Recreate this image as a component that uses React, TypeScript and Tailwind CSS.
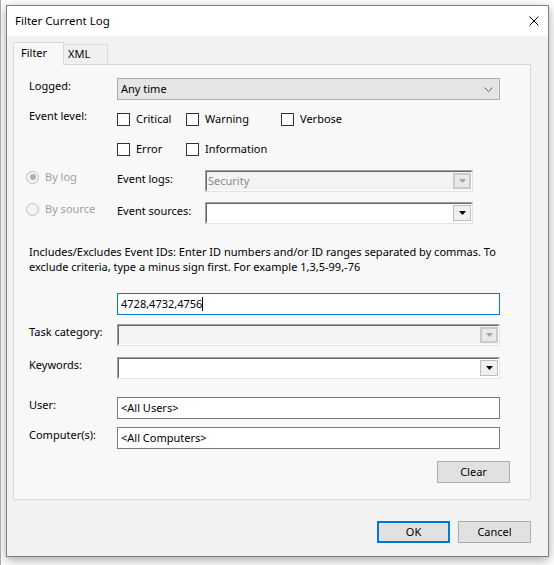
import React from 'react';

const DownArrow = ({ color }: { color: string }) => (
  <svg width="7" height="4" viewBox="0 0 7 4">
    <polygon points="0,0 7,0 3.5,4" fill={color} />
  </svg>
);

const Checkbox = ({ label }: { label: string }) => (
  <div className="flex items-center gap-[6px] h-[22px]">
    <span className="w-[13px] h-[13px] border border-[#333333] bg-white" />
    <span>{label}</span>
  </div>
);

const Radio = ({ label, checked }: { label: string; checked?: boolean }) => (
  <div className="flex items-center gap-[6px] h-[14px] text-[#a0a0a0]">
    <span className="w-[13px] h-[13px] rounded-full border border-[#bcbcbc] bg-[#f4f4f4] flex items-center justify-center">
      {checked && <span className="w-[6px] h-[6px] rounded-full bg-[#b0b0b0]" />}
    </span>
    <span>{label}</span>
  </div>
);

// old style sunken combo box with the square drop button
const ClassicCombo = ({ value, disabled, wide }: { value?: string; disabled?: boolean; wide?: boolean }) => (
  <div
    className={
      (wide ? 'w-[383px] ' : 'w-[268px] ') +
      'h-[22px] border border-t-[#a0a0a0] border-l-[#a0a0a0] border-b-[#e3e3e3] border-r-[#e3e3e3]'
    }
  >
    <div
      className={
        'h-full flex items-center border border-t-[#696969] border-l-[#696969] border-b-white border-r-white ' +
        (disabled ? 'bg-[#f3f3f3]' : 'bg-white')
      }
    >
      <span className="flex-1 pl-[1px] text-[#8a8a8a] leading-[16px]">{value}</span>
      {disabled ? (
        <span className="w-[18px] h-[16px] border-2 border-[#cacaca] bg-[#e9e9e9] flex items-center justify-center">
          <DownArrow color="#a6a6a6" />
        </span>
      ) : (
        <span className="w-[18px] h-[16px] border border-[#bdbdbd] bg-[#f0f0f0] flex items-center justify-center">
          <DownArrow color="#000000" />
        </span>
      )}
    </div>
  </div>
);

const TextBox = ({ value, focused }: { value: string; focused?: boolean }) => (
  <div
    className={
      'w-[383px] h-[22px] bg-white flex items-center pl-[3px] border ' +
      (focused ? 'border-[#0078d7]' : 'border-[#7a7a7a]')
    }
  >
    <span className="leading-[16px]">{value}</span>
    {focused && <span className="w-px h-[14px] bg-black" />}
  </div>
);

const Button = ({ label, primary }: { label: string; primary?: boolean }) => (
  <div
    className={
      'w-[73px] h-[22px] bg-[#e1e1e1] flex items-center justify-center leading-[16px] ' +
      (primary ? 'border-2 border-[#0078d7]' : 'border border-[#adadad]')
    }
  >
    {label}
  </div>
);

const Label = ({ text }: { text: string }) => <div className="w-[88px] leading-[16px]">{text}</div>;

export default function App() {
  return (
    <div className="w-[554px] h-[565px] bg-white border-l border-[#a8a8a8] pl-[5px] pt-[5px] overflow-hidden font-['Noto_Sans','Open_Sans',sans-serif] text-[11px] text-black">
      <div className="w-[543px] h-[552px] border border-[#808080] bg-[#f2f2f2] flex flex-col shadow-[0_3px_10px_rgba(0,0,0,0.35)]">
        {/* title bar */}
        <div className="h-[30px] bg-white flex items-center justify-between pl-[8px] pr-[9px]">
          <span className="text-[11.5px]">Filter Current Log</span>
          <svg width="10" height="10" viewBox="0 0 10 10">
            <path d="M0.5 0.5 L9.5 9.5 M9.5 0.5 L0.5 9.5" stroke="#000" strokeWidth="1" />
          </svg>
        </div>

        <div className="flex-1 px-[6px] pt-[6px]">
          {/* tabs */}
          <div className="flex items-end h-[23px] relative z-10">
            <div className="w-[51px] h-[23px] border border-b-0 border-[#d9d9d9] bg-[#f8f8f8] pl-[7px] pt-[2px] leading-[16px]">
              Filter
            </div>
            <div className="w-[44px] h-[20px] mb-px border border-l-0 border-b-0 border-[#d9d9d9] bg-[#f0f0f0] pl-[4px] pt-[1px] leading-[16px]">
              XML
            </div>
          </div>

          {/* tab page */}
          <div className="-mt-px w-[518px] h-[436px] border border-[#d9d9d9] bg-[#f8f8f8] pl-[15px] pt-[13px]">
            <div className="flex">
              <Label text="Logged:" />
              <div className="w-[383px] h-[22px] bg-[#e5e5e5] border border-[#adadad] flex items-center justify-between pl-[3px] pr-[6px]">
                <span className="leading-[16px]">Any time</span>
                <svg width="9" height="5" viewBox="0 0 9 5">
                  <path d="M0.5 0.5 L4.5 4.5 L8.5 0.5" stroke="#606060" strokeWidth="1" fill="none" />
                </svg>
              </div>
            </div>

            <div className="flex mt-[8px]">
              <Label text="Event level:" />
              <div className="grid grid-cols-[69px_95px_auto] gap-y-[8px]">
                <Checkbox label="Critical" />
                <Checkbox label="Warning" />
                <Checkbox label="Verbose" />
                <Checkbox label="Error" />
                <Checkbox label="Information" />
              </div>
            </div>

            <div className="flex mt-[10px] -ml-[3px]">
              <div className="w-[91px]">
                <Radio label="By log" checked />
              </div>
              <div className="w-[88px] leading-[16px] pt-[1px]">Event logs:</div>
              <ClassicCombo value="Security" disabled />
            </div>

            <div className="flex mt-[10px] -ml-[3px]">
              <div className="w-[91px]">
                <Radio label="By source" />
              </div>
              <div className="w-[88px] leading-[16px] pt-[1px]">Event sources:</div>
              <ClassicCombo />
            </div>

            <p className="mt-[20px] leading-[15px] whitespace-nowrap">
              Includes/Excludes Event IDs: Enter ID numbers and/or ID ranges separated by commas. To
              <br />
              exclude criteria, type a minus sign first. For example 1,3,5-99,-76
            </p>

            <div className="mt-[19px] ml-[88px]">
              <TextBox value="4728,4732,4756" focused />
            </div>

            <div className="flex mt-[9px]">
              <Label text="Task category:" />
              <ClassicCombo disabled wide />
            </div>

            <div className="flex mt-[11px]">
              <Label text="Keywords:" />
              <ClassicCombo wide />
            </div>

            <div className="flex mt-[18px]">
              <Label text="User:" />
              <TextBox value="<All Users>" />
            </div>

            <div className="flex mt-[8px]">
              <Label text="Computer(s):" />
              <TextBox value="<All Computers>" />
            </div>

            <div className="flex justify-end mt-[12px] mr-[20px]">
              <Button label="Clear" />
            </div>
          </div>

          <div className="w-[518px] flex justify-end gap-[8px] mt-[21px]">
            <Button label="OK" primary />
            <Button label="Cancel" />
          </div>
        </div>
      </div>
    </div>
  );
}
